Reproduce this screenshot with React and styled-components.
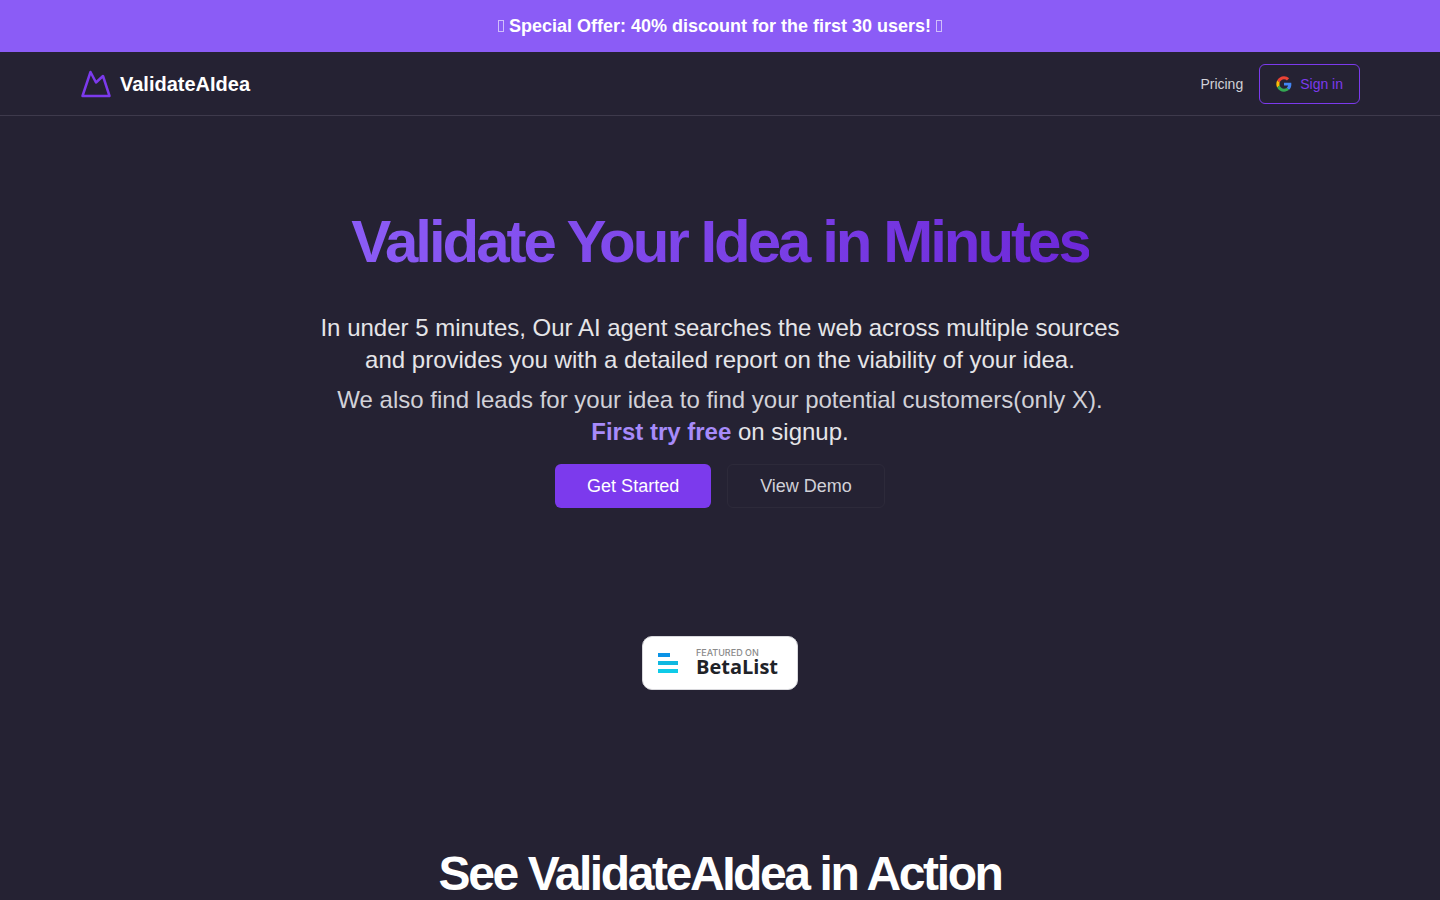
import React from "react";
import styled, { createGlobalStyle } from "styled-components";

const GlobalStyle = createGlobalStyle`
  *, *::before, *::after {
    box-sizing: border-box;
  }

  body {
    margin: 0;
    background: #252233;
    color: #fafafa;
    font-family: "Liberation Sans", Arial, sans-serif;
    overflow-x: hidden;
  }

  h1, h2, p {
    margin: 0;
  }
`;

const Page = styled.div`
  display: flex;
  flex-direction: column;
  height: 100vh;
  overflow-y: auto;
  scrollbar-width: none;
`;

const Banner = styled.div`
  flex-shrink: 0;
  padding: 12px 16px;
  background: #8b5cf6;
  color: #fff;
  font-size: 18px;
  font-weight: bold;
  line-height: 28px;
  text-align: center;
`;

const BannerMark = styled.span`
  display: inline-block;
  width: 6px;
  height: 12px;
  border: 1px solid rgba(255, 255, 255, 0.6);
`;

const Header = styled.header`
  flex-shrink: 0;
  display: flex;
  justify-content: space-between;
  align-items: center;
  height: 64px;
  padding: 0 80px;
  border-bottom: 1px solid #3e3a4c;
`;

const Brand = styled.a`
  display: flex;
  align-items: center;
  gap: 8px;
  color: #fff;
  font-size: 20px;
  font-weight: bold;
  line-height: 28px;
  text-decoration: none;
`;

const Nav = styled.nav`
  display: flex;
  align-items: center;
  gap: 16px;
`;

const NavLink = styled.a`
  color: #d1d1d8;
  font-size: 14px;
  line-height: 20px;
  text-decoration: none;
`;

const Button = styled.button`
  display: inline-flex;
  align-items: center;
  justify-content: center;
  gap: 8px;
  height: ${({ $large }) => ($large ? "44px" : "40px")};
  padding: ${({ $large }) => ($large ? "0 32px" : "0 16px")};
  border: ${({ $border }) => ($border ? `1px solid ${$border}` : "none")};
  border-radius: 6px;
  background: ${({ $fill }) => $fill || "transparent"};
  color: ${({ $color }) => $color};
  font-family: inherit;
  font-size: ${({ $large }) => ($large ? "18px" : "14px")};
  line-height: ${({ $large }) => ($large ? "28px" : "20px")};
  cursor: pointer;
`;

const Hero = styled.section`
  display: flex;
  flex-direction: column;
  align-items: center;
  padding: 96px 16px 128px;
  text-align: center;
`;

const Title = styled.h1`
  background: linear-gradient(to right, #8b5cf6, #6d28d9);
  background-clip: text;
  color: transparent;
  font-size: 60px;
  line-height: 60px;
  letter-spacing: -0.05em;
`;

const Intro = styled.div`
  display: flex;
  flex-direction: column;
  gap: 8px;
  max-width: 800px;
  margin: 40px 0 16px;
  color: #e5e5e8;
  font-size: 24px;
  line-height: 32px;
`;

const Muted = styled.span`
  color: #d1d1d8;
`;

const Accent = styled.strong`
  color: #a78bfa;
`;

const Actions = styled.div`
  display: flex;
  gap: 16px;
`;

const Featured = styled.section`
  display: flex;
  justify-content: center;
  padding-bottom: 160px;
`;

const Badge = styled.a`
  display: flex;
  align-items: center;
  gap: 18px;
  width: 156px;
  height: 54px;
  padding: 0 15px;
  border: 1px solid #d8d8dc;
  border-radius: 10px;
  background: #fff;
  text-decoration: none;
`;

const BadgeText = styled.span`
  display: flex;
  flex-direction: column;
  padding-bottom: 2px;
  color: #1f2328;
`;

const BadgeLabel = styled.span`
  color: #8a8a8a;
  font-family: Inter, sans-serif;
  font-size: 9px;
  font-weight: 500;
  line-height: 10px;
  white-space: nowrap;
`;

const BadgeName = styled.span`
  font-family: "Open Sans", sans-serif;
  font-size: 20px;
  font-weight: 700;
  line-height: 18px;
`;

const Demo = styled.section`
  padding: 0 16px 96px;
  text-align: center;
`;

const DemoTitle = styled.h2`
  color: #fff;
  font-size: 48px;
  line-height: 48px;
  letter-spacing: -0.05em;
`;

const LogoIcon = () => (
  <svg width="32" height="32" viewBox="0 0 32 32" fill="none" aria-hidden="true">
    <path
      d="M2.5 28 10.5 4 16 14.5 23 8 29.5 28Z"
      stroke="#7c3aed"
      strokeWidth="2.5"
      strokeLinejoin="round"
    />
  </svg>
);

const GoogleIcon = () => (
  <svg width="16" height="16" viewBox="-1 -1 50 50" aria-hidden="true">
    <path
      fill="#EA4335"
      d="M24 9.5c3.54 0 6.71 1.22 9.21 3.6l6.85-6.85C35.9 2.38 30.47 0 24 0 14.62 0 6.51 5.38 2.56 13.22l7.98 6.19C12.43 13.72 17.74 9.5 24 9.5z"
    />
    <path
      fill="#4285F4"
      d="M46.98 24.55c0-1.57-.15-3.09-.38-4.55H24v9.02h12.94c-.58 2.96-2.26 5.48-4.78 7.18l7.73 6c4.51-4.18 7.09-10.36 7.09-17.65z"
    />
    <path
      fill="#FBBC05"
      d="M10.53 28.59c-.48-1.45-.76-2.99-.76-4.59s.27-3.14.76-4.59l-7.98-6.19C.92 16.46 0 20.12 0 24c0 3.88.92 7.54 2.56 10.78l7.97-6.19z"
    />
    <path
      fill="#34A853"
      d="M24 48c6.48 0 11.93-2.13 15.89-5.81l-7.73-6c-2.15 1.45-4.92 2.3-8.16 2.3-6.26 0-11.57-4.22-13.47-9.91l-7.98 6.19C6.51 42.62 14.62 48 24 48z"
    />
  </svg>
);

const BetaListIcon = () => (
  <svg width="20" height="20" viewBox="0 0 20 20" aria-hidden="true">
    <rect width="12" height="4" fill="#0b93e6" />
    <rect y="8" width="20" height="4" fill="#0fb8e0" />
    <rect y="16" width="20" height="4" fill="#0fcbe8" />
  </svg>
);

export default function App() {
  return (
    <Page>
      <GlobalStyle />
      <Banner>
        <BannerMark /> Special Offer: 40% discount for the first 30 users!{" "}
        <BannerMark />
      </Banner>
      <Header>
        <Brand href="#">
          <LogoIcon />
          ValidateAIdea
        </Brand>
        <Nav>
          <NavLink href="#pricing">Pricing</NavLink>
          <Button $border="#7c3aed" $color="#7c3aed">
            <GoogleIcon />
            Sign in
          </Button>
        </Nav>
      </Header>
      <main>
        <Hero>
          <Title>Validate Your Idea in Minutes</Title>
          <Intro>
            <p>
              In under 5 minutes, Our AI agent searches the web across multiple
              sources and provides you with a detailed report on the viability
              of your idea.
            </p>
            <p>
              <Muted>
                We also find leads for your idea to find your potential
                customers(only X).
              </Muted>
              <br />
              <Accent>First try free</Accent> on signup.
            </p>
          </Intro>
          <Actions>
            <Button $large $fill="#7c3aed" $color="#fff">
              Get Started
            </Button>
            <Button $large $border="#2d2a3a" $color="#d1d1d8">
              View Demo
            </Button>
          </Actions>
        </Hero>
        <Featured>
          <Badge href="#betalist">
            <BetaListIcon />
            <BadgeText>
              <BadgeLabel>FEATURED ON</BadgeLabel>
              <BadgeName>BetaList</BadgeName>
            </BadgeText>
          </Badge>
        </Featured>
        <Demo>
          <DemoTitle>See ValidateAIdea in Action</DemoTitle>
        </Demo>
      </main>
    </Page>
  );
}
